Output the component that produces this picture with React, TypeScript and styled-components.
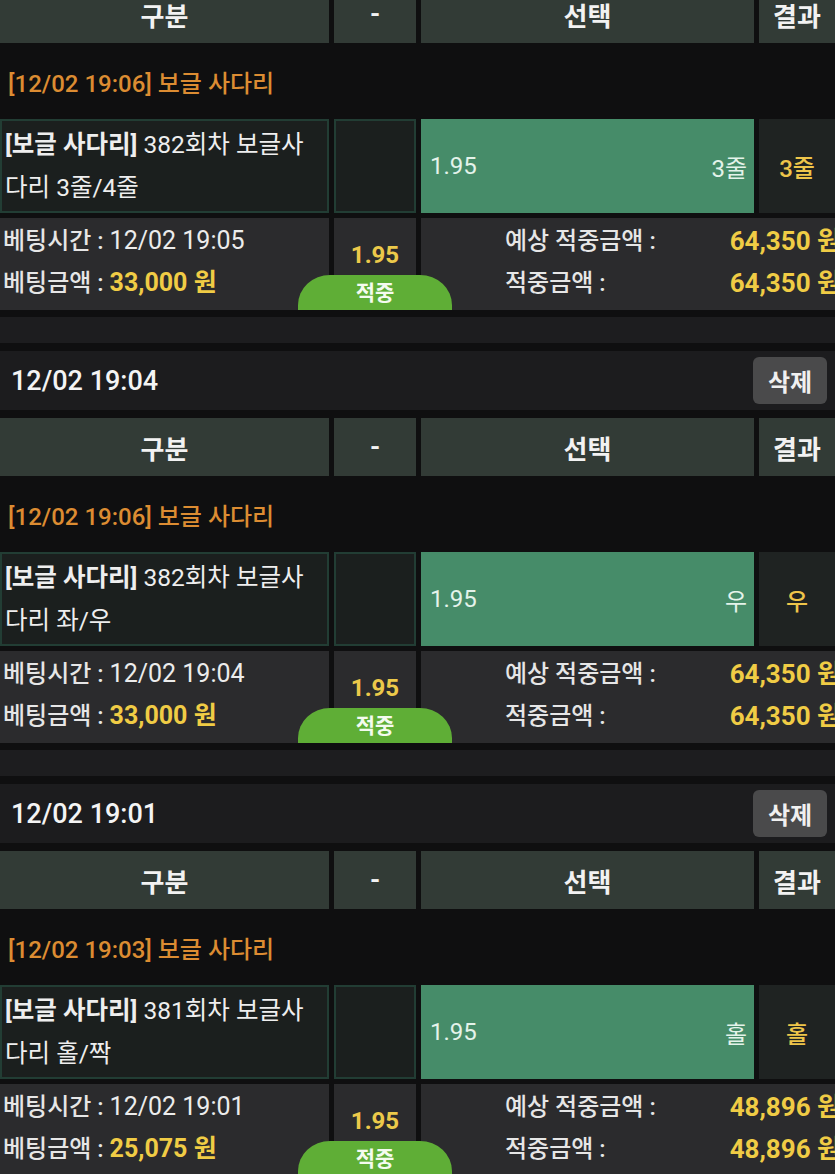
import React from "react";
import styled, { createGlobalStyle } from "styled-components";

const GlobalStyle = createGlobalStyle`
  html, body {
    margin: 0;
    padding: 0;
    background: #0f0f10;
  }
  body {
    overflow: hidden;
    font-family: Roboto, "Noto Sans CJK KR", sans-serif;
    color: #f1f1f1;
  }
`;

const Page = styled.div`
  width: 835px;
  margin-top: -82px;
`;

const Card = styled.section`
  display: flex;
  flex-direction: column;
`;

const TitleBar = styled.div`
  height: 59px;
  box-sizing: border-box;
  background: #1c1c1e;
  display: flex;
  align-items: center;
  justify-content: space-between;
  padding: 0 8px 0 11px;
`;

const TitleText = styled.span`
  font-size: 27px;
  font-weight: 500;
  color: #f4f4f4;
`;

const DeleteButton = styled.button`
  width: 74px;
  height: 47px;
  border: none;
  border-radius: 6px;
  background: #4a4a4b;
  color: #f0f0f0;
  font: 700 24px "Noto Sans CJK KR", sans-serif;
  padding: 0;
`;

const Grid = styled.div<{ $height: number; $top: number }>`
  display: grid;
  grid-template-columns: 329px 82px 333px 1fr;
  column-gap: 5px;
  height: ${(p) => p.$height}px;
  margin-top: ${(p) => p.$top}px;
`;

const HeaderCell = styled.div`
  background: #323b36;
  display: flex;
  align-items: center;
  justify-content: center;
  font-size: 26px;
  font-weight: 700;
  color: #f2f2f2;
`;

const GameTitle = styled.div`
  height: 76px;
  display: flex;
  align-items: center;
  padding-left: 8px;
  color: #dc8c32;
  font-size: 24px;
  font-weight: 500;
`;

const NameCell = styled.div`
  box-sizing: border-box;
  background: #1b1f1e;
  border: 2px solid #223d34;
  display: flex;
  align-items: center;
  padding: 0 8px 0 3px;
  font-size: 24.5px;
  line-height: 43px;
  color: #eeeeee;
`;

const NameText = styled.p`
  margin: 0;
`;

const Strong = styled.b`
  font-weight: 700;
`;

const PickCell = styled.div`
  background: #468c69;
  display: flex;
  align-items: center;
  justify-content: space-between;
  padding: 0 7px 0 9px;
  font-size: 24px;
  color: #e4f3ea;
`;

const ResultCell = styled.div`
  background: #1f2322;
  display: flex;
  align-items: center;
  justify-content: center;
  font-size: 24px;
  font-weight: 500;
  color: #eec54a;
`;

const InfoLeft = styled.div`
  background: #2b2b2d;
  padding: 2px 0 0 3px;
  font-size: 24px;
  line-height: 42px;
  color: #ececec;
  white-space: nowrap;
`;

const Label = styled.span`
  font-weight: 500;
  color: #e6e6e6;
`;

const Num = styled.span`
  font-size: 25px;
`;

const Yellow = styled.span`
  font-size: 25px;
  font-weight: 700;
  color: #f0cc45;
`;

const InfoMid = styled.div`
  position: relative;
  background: #2b2b2d;
  text-align: center;
  padding-top: 22px;
  line-height: 30px;
  font-size: 24px;
  font-weight: 700;
  color: #ecc94a;
  z-index: 1;
`;

const HitBadge = styled.div`
  position: absolute;
  bottom: 0;
  left: 50%;
  transform: translateX(-50%);
  width: 154px;
  height: 35px;
  border-radius: 32px 32px 0 0 / 30px 30px 0 0;
  background: #5fae36;
  color: #f4fbef;
  font: 700 21px "Noto Sans CJK KR", sans-serif;
  line-height: 33px;
  text-align: center;
`;

const InfoRight = styled.div`
  grid-column: 3 / 5;
  background: #2b2b2d;
  display: grid;
  grid-template-columns: auto 1fr;
  align-content: start;
  padding: 2px 0 0 84px;
  font-size: 24px;
  line-height: 42px;
  white-space: nowrap;
`;

const Amount = styled.span`
  text-align: right;
  font-size: 26px;
  font-weight: 700;
  color: #f0cc45;
  margin-right: -6px;
`;

const Band = styled.div`
  height: 26px;
  margin: 7px 0 8px;
  background: #1d1d1f;
`;

type Bet = {
  title: string;
  game: string;
  round: string;
  pick: string;
  time: string;
  stake: string;
  expected: string;
  win: string;
};

const bets: Bet[] = [
  {
    title: "12/02 19:05",
    game: "[12/02 19:06] 보글 사다리",
    round: "382회차 보글사다리 3줄/4줄",
    pick: "3줄",
    time: "12/02 19:05",
    stake: "33,000",
    expected: "64,350",
    win: "64,350",
  },
  {
    title: "12/02 19:04",
    game: "[12/02 19:06] 보글 사다리",
    round: "382회차 보글사다리 좌/우",
    pick: "우",
    time: "12/02 19:04",
    stake: "33,000",
    expected: "64,350",
    win: "64,350",
  },
  {
    title: "12/02 19:01",
    game: "[12/02 19:03] 보글 사다리",
    round: "381회차 보글사다리 홀/짝",
    pick: "홀",
    time: "12/02 19:01",
    stake: "25,075",
    expected: "48,896",
    win: "48,896",
  },
];

function BetCard({ bet }: { bet: Bet }) {
  return (
    <Card>
      <TitleBar>
        <TitleText>{bet.title}</TitleText>
        <DeleteButton>삭제</DeleteButton>
      </TitleBar>
      <Grid $height={58} $top={8}>
        <HeaderCell>구분</HeaderCell>
        <HeaderCell>-</HeaderCell>
        <HeaderCell>선택</HeaderCell>
        <HeaderCell>결과</HeaderCell>
      </Grid>
      <GameTitle>{bet.game}</GameTitle>
      <Grid $height={94} $top={0}>
        <NameCell>
          <NameText>
            <Strong>[보글 사다리]</Strong> {bet.round}
          </NameText>
        </NameCell>
        <NameCell />
        <PickCell>
          <span>1.95</span>
          <span>{bet.pick}</span>
        </PickCell>
        <ResultCell>{bet.pick}</ResultCell>
      </Grid>
      <Grid $height={92} $top={5}>
        <InfoLeft>
          <div>
            <Label>베팅시간 : </Label>
            <Num>{bet.time}</Num>
          </div>
          <div>
            <Label>베팅금액 : </Label>
            <Yellow>{bet.stake} 원</Yellow>
          </div>
        </InfoLeft>
        <InfoMid>
          1.95
          <HitBadge>적중</HitBadge>
        </InfoMid>
        <InfoRight>
          <Label>예상 적중금액 :</Label>
          <Amount>{bet.expected} 원</Amount>
          <Label>적중금액 :</Label>
          <Amount>{bet.win} 원</Amount>
        </InfoRight>
      </Grid>
      <Band />
    </Card>
  );
}

export default function App() {
  return (
    <>
      <GlobalStyle />
      <Page>
        {bets.map((b, i) => (
          <BetCard key={i} bet={b} />
        ))}
      </Page>
    </>
  );
}
